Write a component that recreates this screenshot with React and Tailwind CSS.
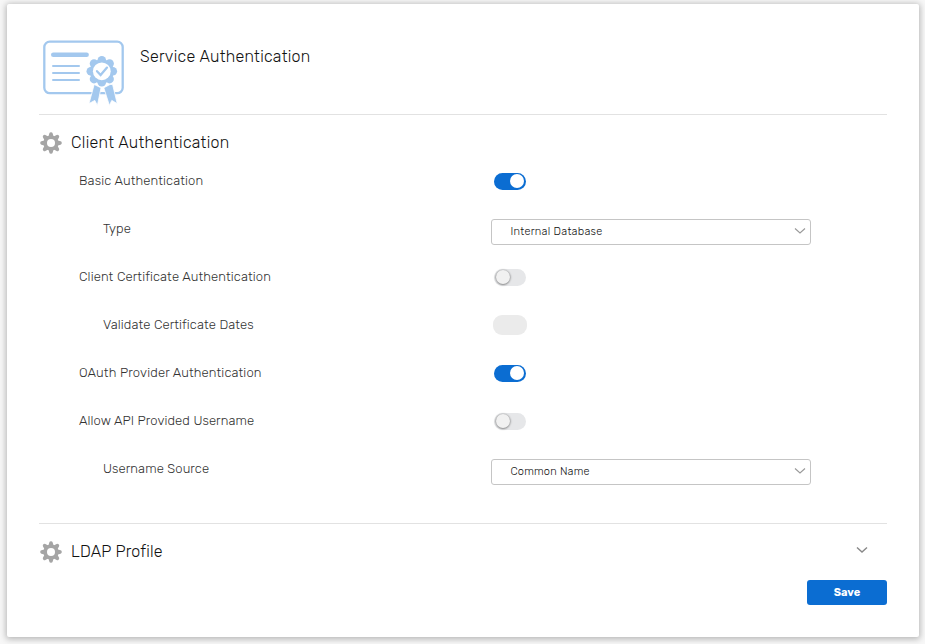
import React from 'react';

function Certificate() {
  const petals = Array.from({ length: 8 }, (_, i) => {
    const a = (i * Math.PI) / 4;
    return [61.8 + 11 * Math.cos(a), 33.3 + 11 * Math.sin(a)];
  });
  return (
    <svg width="84" height="68" viewBox="0 0 84 68" className="block shrink-0">
      <rect x="4.3" y="3.6" width="78.4" height="51.6" rx="5.5" fill="white" stroke="#a3c8ee" strokeWidth="2.3" />
      <path d="M13.3 16.8H46.6" stroke="#a3c8ee" strokeWidth="4.6" strokeLinecap="round" />
      <path d="M13 28h26M13 35h26M13 42h26" stroke="#a3c8ee" strokeWidth="2" strokeLinecap="round" />
      <circle cx="61.8" cy="33.3" r="16.2" fill="white" />
      <path
        d="M54.2 46.5L61 49.8L57.4 67.4L54.8 62.4L49 65.6ZM70 46.5L63.8 49.8L69.4 67.4L71.8 62.4L77.2 65.6L72.6 46.5Z"
        fill="#a3c8ee"
        stroke="white"
        strokeWidth="0.8"
      />
      <circle cx="61.8" cy="33.3" r="12" fill="#a3c8ee" />
      {petals.map(([x, y], i) => (
        <circle key={i} cx={x} cy={y} r="4.3" fill="#a3c8ee" />
      ))}
      <circle cx="61.8" cy="33.3" r="8.9" fill="white" />
      <path d="M57 33.2L60.6 37L67 29.6" fill="none" stroke="#a3c8ee" strokeWidth="2.3" strokeLinecap="round" />
    </svg>
  );
}

function Gear() {
  return (
    <svg width="22" height="22" viewBox="-11 -11 22 22" className="block shrink-0">
      {[0, 45, 90, 135].map((a) => (
        <path
          key={a}
          transform={`rotate(${a})`}
          d="M-2.7 -6L-1.7 -9.6Q-1.4 -10.8 0 -10.8Q1.4 -10.8 1.7 -9.6L2.7 -6V6L1.7 9.6Q1.4 10.8 0 10.8Q-1.4 10.8 -1.7 9.6L-2.7 6Z"
          fill="#a5a5a5"
        />
      ))}
      <circle r="7.6" fill="#a5a5a5" />
      <circle r="4" fill="white" />
    </svg>
  );
}

function Chevron({ className, strokeWidth = 1.1 }) {
  return (
    <svg width="12" height="8" viewBox="0 0 12 8" className={className}>
      <path d="M1 1.5L6 6L11 1.5" fill="none" stroke="currentColor" strokeWidth={strokeWidth} />
    </svg>
  );
}

function Toggle({ state }) {
  if (state === 'disabled') {
    return <div className="ml-[2px] h-5 w-[34px] rounded-[9px] bg-[#ebebeb]" />;
  }
  if (state === 'on') {
    return (
      <div className="mt-[2px] ml-[3px] flex h-[17px] w-8 items-start justify-end rounded-full bg-[#0b6dd2] pt-[1px] pr-[2.5px]">
        <div className="size-[14px] rounded-full bg-white" />
      </div>
    );
  }
  return (
    <div className="mt-[2px] ml-[3px] flex h-[17px] w-8 items-start rounded-full bg-[#e6e7e9] pt-[1px] pl-[2px]">
      <div className="size-[14px] rounded-full bg-[#f1f1f1] shadow-[0_0.5px_2px_0.5px_rgba(0,0,0,0.42)]" />
    </div>
  );
}

function Select({ value, tracking }) {
  return (
    <div className="flex h-[26px] w-[320px] items-center justify-between rounded-[3px] border border-[#c5c5c5] bg-white pr-[4px] pl-[18.5px]">
      <span className={`mb-[2px] text-[11px] leading-none text-[#111] ${tracking}`}>{value}</span>
      <Chevron className="mb-[2px] text-[#999]" />
    </div>
  );
}

const rows = [
  { label: 'Basic Authentication', tracking: 'tracking-[0.13px]', toggle: 'on' },
  { label: 'Type', indent: true, tracking: 'tracking-[0.1px]', select: 'Internal Database', selectTracking: 'tracking-[0.27px]' },
  { label: 'Client Certificate Authentication', tracking: 'tracking-[0.13px]', toggle: 'off' },
  { label: 'Validate Certificate Dates', indent: true, tracking: 'tracking-[0.11px]', toggle: 'disabled' },
  { label: 'OAuth Provider Authentication', tracking: 'tracking-[0.15px]', toggle: 'on' },
  { label: 'Allow API Provided Username', tracking: 'tracking-[0.1px]', toggle: 'off' },
  { label: 'Username Source', indent: true, tracking: 'tracking-[0.1px]', select: 'Common Name', selectTracking: 'tracking-[0.19px]' },
];

export default function App() {
  return (
    <div className="h-[644px] w-[925px] overflow-hidden bg-[#f7f7f7] pt-1 pl-[7px] font-[Rubik,Roboto,sans-serif] font-light">
      <main className="flex h-[633px] w-[912px] flex-col rounded-[2px] bg-white px-8 shadow-[0_1px_6px_1px_rgba(0,0,0,0.28)]">
        <header className="flex h-[111px] shrink-0 border-b border-[#e2e2e2] pt-[34px] pl-[1px]">
          <Certificate />
          <h1 className="mt-[7px] ml-4 text-[16px] leading-6 tracking-[0.29px] text-[#111]">
            Service Authentication
          </h1>
        </header>
        <section className="h-[409px] shrink-0 border-b border-[#e2e2e2]">
          <div className="flex h-[56px] items-center pl-[1px]">
            <Gear />
            <h2 className="ml-[9px] text-[16px] leading-6 tracking-[0.31px] text-[#111]">Client Authentication</h2>
          </div>
          {rows.map((r) => (
            <div key={r.label} className="flex h-12 items-start">
              <div className={`w-[452px] shrink-0 text-[13px] leading-5 text-[#333] ${r.tracking} ${r.indent ? 'pl-16' : 'pl-10'}`}>
                {r.label}
              </div>
              {r.toggle ? <Toggle state={r.toggle} /> : <Select value={r.select} tracking={r.selectTracking} />}
            </div>
          ))}
        </section>
        <div className="flex h-[56px] shrink-0 items-center pr-[19.5px] pl-[1px]">
          <Gear />
          <h2 className="ml-[9px] text-[16px] leading-6 tracking-[0.18px] text-[#111]">LDAP Profile</h2>
          <Chevron className="mb-[5px] ml-auto text-[#888]" strokeWidth={1.4} />
        </div>
        <button className="h-[25px] w-20 self-end rounded-[3px] bg-[#0b6dd2] pt-[1px] text-[11px] font-bold text-white">
          Save
        </button>
      </main>
    </div>
  );
}
